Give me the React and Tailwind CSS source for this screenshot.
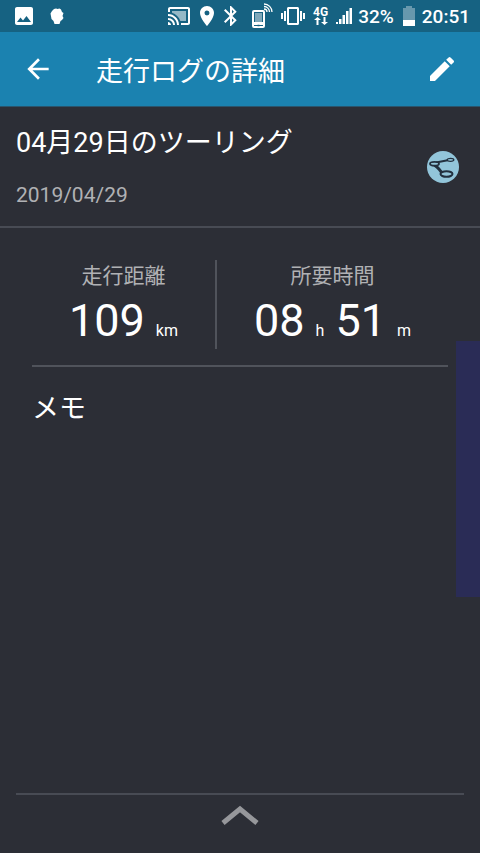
import React from 'react';
import { MdArrowBack, MdBluetooth, MdCreate, MdImage, MdLocationOn, MdVibration } from 'react-icons/md';

const log = {
  title: '04月29日のツーリング',
  date: '2019/04/29',
  distance: '109',
  hours: '08',
  minutes: '51',
};

function BlobIcon() {
  return (
    <svg viewBox="0 0 14 17" className="h-[17px] w-[14px]" fill="currentColor">
      <path d="M4 1 6 0.500 7.500 1 9.500 0.500 11 1.500 12 4 13.500 5 12.500 8 13.500 10 12 12 10.500 13 9.500 16 4.500 16 3.500 13 1.500 11 0.500 5.500 2 3Z" />
    </svg>
  );
}

function CastIcon() {
  return (
    <svg viewBox="0 0 24 24" className="size-6" fill="currentColor">
      <path d="M19 7H5v1.630c3.960 1.280 7.090 4.410 8.370 8.370H19V7z" opacity="0.55" />
      <path d="M1 18v3h3c0-1.660-1.340-3-3-3zm0-4v2c2.760 0 5 2.240 5 5h2c0-3.870-3.130-7-7-7zM1 10v2c4.970 0 9 4.030 9 9h2c0-6.080-4.930-11-11-11zm20-7H3c-1.100 0-2 .9-2 2v3h2V5h18v14h-7v2h7c1.100 0 2-.9 2-2V5c0-1.100-.9-2-2-2z" />
    </svg>
  );
}

function PhoneSignalIcon() {
  return (
    <svg viewBox="0 0 22 26" className="h-[26px] w-[22px]" fill="none" stroke="currentColor">
      <rect x="2" y="8" width="11" height="16" rx="1" strokeWidth="2" />
      <rect x="4" y="10" width="7" height="9" fill="currentColor" stroke="none" opacity="0.45" />
      <path d="M2 20.500h11" strokeWidth="3" />
      <path d="M6.500 22.500h2" stroke="#166282" strokeWidth="1.500" />
      <path d="M13 6a3 3 0 0 1 3 3M13 3.500A5.500 5.500 0 0 1 18.500 9M13 1a8 8 0 0 1 8 8" strokeWidth="1.300" />
    </svg>
  );
}

function DataIcon() {
  return (
    <span className="flex flex-col items-center">
      <span className="text-xs font-bold leading-[10px]">4G</span>
      <svg viewBox="0 0 14 8" className="h-2 w-[14px]" fill="currentColor">
        <path d="M3.500 0 7 3H4.500v5h-2V3H0zM9.500 0h2v5H14l-3.500 3L7 5h2.500z" />
      </svg>
    </span>
  );
}

function SignalIcon() {
  return (
    <svg viewBox="0 0 16 18" className="h-[18px] w-4" fill="currentColor">
      <path d="M0 15h2v2H0zM3 12h2.500v5H3zM6.500 8H9v9H6.500zM10 4h2.500v13H10zM13.500 1H16v16h-2.500z" />
    </svg>
  );
}

function BatteryIcon() {
  return (
    <svg viewBox="0 0 14 20" className="h-5 w-[14px]" fill="currentColor">
      <path d="M4 0h6v2h3v12H1V2h3z" opacity="0.35" />
      <path d="M1 14h12v6H1z" />
    </svg>
  );
}

function ShareRouteIcon() {
  return (
    <svg viewBox="0 0 32 32" className="size-8" fill="none" stroke="#22303f">
      <circle cx="16" cy="16" r="16" fill="#92c5da" stroke="none" />
      <path d="M9 11.500 22 9" strokeWidth="1.800" />
      <path d="M7 14c3 1 5 4 8 8" strokeWidth="3" />
      <ellipse cx="23.500" cy="8.800" rx="3.300" ry="1.500" fill="#92c5da" strokeWidth="1.300" />
      <ellipse cx="7.500" cy="12.800" rx="4.500" ry="1.900" fill="#92c5da" strokeWidth="1.800" />
      <ellipse cx="19.500" cy="23" rx="6" ry="2.800" fill="#92c5da" strokeWidth="2" />
    </svg>
  );
}

function StatusBar() {
  return (
    <div className="flex h-8 items-center justify-between bg-[#166282] pr-[10px] pl-3">
      <div className="flex items-center gap-[14px]">
        <MdImage size={24} />
        <BlobIcon />
      </div>
      <div className="flex items-center">
        <CastIcon />
        <span className="flex pl-1"><MdLocationOn size={24} /></span>
        <MdBluetooth size={24} />
        <span className="flex items-center gap-2 pl-2">
          <PhoneSignalIcon />
          <MdVibration size={24} />
          <DataIcon />
          <SignalIcon />
        </span>
        <span className="pt-0.5 pr-2 pl-[6px] text-[19px] font-medium">32%</span>
        <BatteryIcon />
        <span className="pt-0.5 pl-[6px] text-[19px] font-medium">20:51</span>
      </div>
    </div>
  );
}

function Stat({ label, children }) {
  return (
    <div className="flex flex-col items-center">
      <dt className="text-[21px] leading-8 text-[#b0b1b4]">{label}</dt>
      <dd className="flex items-baseline text-[45px] leading-[57px]">{children}</dd>
    </div>
  );
}

function Unit({ children }) {
  return <span className="px-[11px] text-base last:pr-0">{children}</span>;
}

export default function App() {
  return (
    <div
      lang="ja"
      className="relative flex min-h-screen flex-col bg-[#2c2e36] font-['Roboto','Noto_Sans_CJK_JP',sans-serif] text-white"
    >
      <StatusBar />

      <header className="flex h-[75px] items-center border-b border-[#29546c] bg-[#1b82b0] px-[22px]">
        <button type="button" aria-label="戻る">
          <MdArrowBack size={32} />
        </button>
        <h1 className="flex-1 pt-1.5 pl-[42px] text-[27px] leading-10">走行ログの詳細</h1>
        <button type="button" aria-label="編集">
          <MdCreate size={32} />
        </button>
      </header>

      <section className="flex h-[121px] items-center justify-between border-b-2 border-[#484b54] pr-[21px] pl-4">
        <div className="flex flex-col gap-4">
          <h2 className="text-[27px] leading-10">{log.title}</h2>
          <p className="text-[21px] leading-8 text-[#b0b1b4]">{log.date}</p>
        </div>
        <button type="button" aria-label="共有">
          <ShareRouteIcon />
        </button>
      </section>

      <main className="flex-1 px-8">
        <dl className="grid grid-cols-[185px_1fr] border-b-2 border-[#50535b] pt-8 pb-4">
          <div className="border-r-2 border-[#50535b]">
            <Stat label="走行距離">
              {log.distance}
              <Unit>km</Unit>
            </Stat>
          </div>
          <Stat label="所要時間">
            {log.hours}
            <Unit>h</Unit>
            {log.minutes}
            <Unit>m</Unit>
          </Stat>
        </dl>
        <h2 className="pt-[22px] text-[27px] leading-10">メモ</h2>
      </main>

      <footer className="mx-4 flex h-[60px] justify-center border-t-2 border-[#484b54] pt-[10px]">
        <button type="button" aria-label="開く" className="self-start">
          <svg viewBox="0 0 40 20" className="h-5 w-10" fill="none" stroke="#96979b" strokeWidth="5">
            <path d="M3 18 20 4l17 14" />
          </svg>
        </button>
      </footer>

      <div className="absolute top-[341px] right-0 h-64 w-6 bg-[#2a2c56]" />
    </div>
  );
}
